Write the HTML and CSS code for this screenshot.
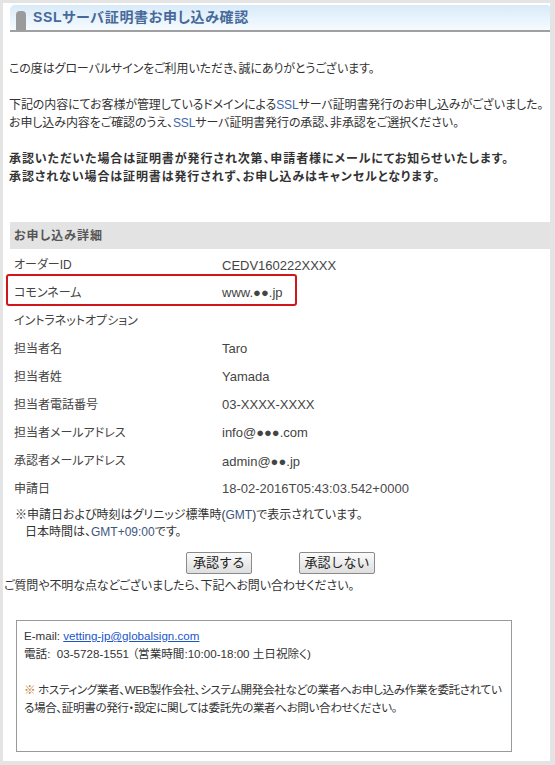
FILE: index.html
```html
<!DOCTYPE html>
<html lang="ja">
<head>
<meta charset="utf-8">
<title>SSLサーバ証明書お申し込み確認</title>
<link rel="stylesheet" href="styles.css">
</head>
<body>
<div class="frame">
  <div class="header">
    <span class="tab"></span>
    <h1 class="title">SSLサーバ証明書お申し込み確認</h1>
  </div>

  <p class="para p1">この度はグローバルサインをご利用いただき、誠にありがとうございます。</p>
  <p class="para p2">下記の内容にてお客様が管理しているドメインによる<span class="en">SSL</span>サーバ証明書発行のお申し込みがございました。<br>お申し込み内容をご確認のうえ、<span class="en">SSL</span>サーバ証明書発行の承認、非承認をご選択ください。</p>
  <p class="para p3 strong">承認いただいた場合は証明書が発行され次第、申請者様にメールにてお知らせいたします。<br>承認されない場合は証明書は発行されず、お申し込みはキャンセルとなります。</p>

  <div class="section">お申し込み詳細</div>
  <div class="rows">
    <div class="row"><span class="label">オーダーID</span><span class="value low">CEDV160222XXXX</span></div>
    <div class="row hl"><span class="label">コモンネーム</span><span class="value">www.●●.jp</span></div>
    <div class="row"><span class="label">イントラネットオプション</span><span class="value"></span></div>
    <div class="row"><span class="label">担当者名</span><span class="value">Taro</span></div>
    <div class="row"><span class="label">担当者姓</span><span class="value">Yamada</span></div>
    <div class="row"><span class="label">担当者電話番号</span><span class="value">03-XXXX-XXXX</span></div>
    <div class="row"><span class="label">担当者メールアドレス</span><span class="value">info@●●●.com</span></div>
    <div class="row"><span class="label">承認者メールアドレス</span><span class="value low">admin@●●.jp</span></div>
    <div class="row"><span class="label">申請日</span><span class="value date">18-02-2016T05:43:03.542+0000</span></div>
  </div>

  <p class="note">※申請日および時刻はグリニッジ標準時(<span class="en soft">GMT</span>)で表示されています。<br><span class="indent">日本時間は、<span class="en soft">GMT+09:00</span>です。</span></p>

  <div class="buttons">
    <button class="btn approve" type="button">承認する</button>
    <button class="btn reject" type="button">承認しない</button>
  </div>

  <p class="para ask">ご質問や不明な点などございましたら、下記へお問い合わせください。</p>

  <div class="contact">
    <p>E-mail: <a class="mail" href="#">vetting-jp@globalsign.com </a><br>電話:&nbsp; 03-5728-1551 （営業時間:10:00-18:00 土日祝除く)</p>
    <p class="caution"><span class="mark">※</span> ホスティング業者、WEB製作会社、システム開発会社などの業者へお申し込み作業を委託されてい<br>る場合、証明書の発行・設定に関しては委託先の業者へお問い合わせください。</p>
  </div>
</div>
</body>
</html>
```

FILE: styles.css
```css
html, body {
  margin: 0;
  padding: 0;
  background: #fff;
}

body {
  font-family: "Liberation Sans", "Noto Sans CJK JP", sans-serif;
  font-size: 12px;
  color: #333;
  font-feature-settings: "palt";
}

.frame {
  box-sizing: border-box;
  width: 555px;
  height: 765px;
  border-top: 3px solid #e4e4e4;
  border-left: 3px solid #e4e4e4;
  border-right: 5px solid #e4e4e4;
  border-bottom: 4px solid #e4e4e4;
  overflow: hidden;
}

.header {
  display: flex;
  align-items: flex-end;
  height: 25px;
  margin: 2px 0 0 7px;
  background: linear-gradient(#d8eaf8, #f6fbff);
  border-bottom: 2px solid #a0a0a0;
  border-radius: 5px 3px 0 0;
}

.tab {
  display: block;
  width: 10px;
  height: 19px;
  margin-left: 6px;
  background: #9b9b9b;
  border-radius: 4px 4px 0 0;
}

.title {
  margin: 0 0 4px 7px;
  font-size: 14px;
  font-weight: bold;
  line-height: 18px;
  letter-spacing: 0.65px;
  color: #46699a;
}

.para {
  margin: 0;
  padding-left: 6px;
  line-height: 18px;
  white-space: nowrap;
  letter-spacing: -0.1px;
}

.p1 { margin-top: 28px; }
.p2 { margin-top: 18px; }
.p3 { margin-top: 18px; }

.strong {
  font-weight: bold;
  color: #333;
  letter-spacing: 0.9px;
}

.en {
  color: #3f68aa;
}

.en.soft {
  color: #3d5680;
}

.section {
  margin: 36px 0 0 7px;
  height: 27px;
  line-height: 28px;
  padding-left: 4px;
  background: #e3e3e3;
  font-weight: bold;
  letter-spacing: 1px;
  color: #555;
}

.rows {
  margin-top: 0;
  padding-left: 11px;
}

.row {
  position: relative;
  display: grid;
  grid-template-columns: 208px auto;
  height: 28px;
  align-items: center;
}

.label {
  color: #444;
}

.value {
  font-size: 13px;
  color: #444;
  padding-top: 2px;
}

.value.low {
  padding-top: 5px;
}

.value.date {
  color: #4a4a4a;
}

.row.hl::after {
  content: "";
  position: absolute;
  left: -8px;
  top: -3px;
  width: 287px;
  height: 28px;
  border: 2px solid #d0161b;
  border-radius: 3px;
}

.note {
  margin: 6px 0 0 12px;
  line-height: 17px;
  color: #333;
  white-space: nowrap;
}

.indent {
  padding-left: 10px;
}

.buttons {
  display: flex;
  gap: 47px;
  margin-top: 11px;
  padding-left: 183px;
}

.btn {
  height: 22px;
  padding: 0;
  font-family: "Liberation Sans", "Noto Sans CJK JP", sans-serif;
  font-size: 13px;
  color: #222;
  background: linear-gradient(#fbfbfb, #dedede);
  border: 1px solid #8a8a8a;
  border-radius: 2px;
  line-height: 20px;
}

.approve { width: 66px; }
.reject { width: 76px; }

.ask {
  margin-top: 3px;
  padding-left: 1px;
}

.contact {
  box-sizing: border-box;
  width: 496px;
  height: 132px;
  margin: 25px 0 0 13px;
  border: 1px solid #999;
  padding: 6px 0 0 7px;
  font-size: 11.6px;
  color: #333;
}

.contact p {
  margin: 0;
  line-height: 18px;
  white-space: nowrap;
}

.contact .caution {
  margin-top: 18px;
  letter-spacing: -0.4px;
}

.mail {
  color: #1a55c8;
  text-decoration: underline;
}

.mark {
  color: #c0772e;
}
```
